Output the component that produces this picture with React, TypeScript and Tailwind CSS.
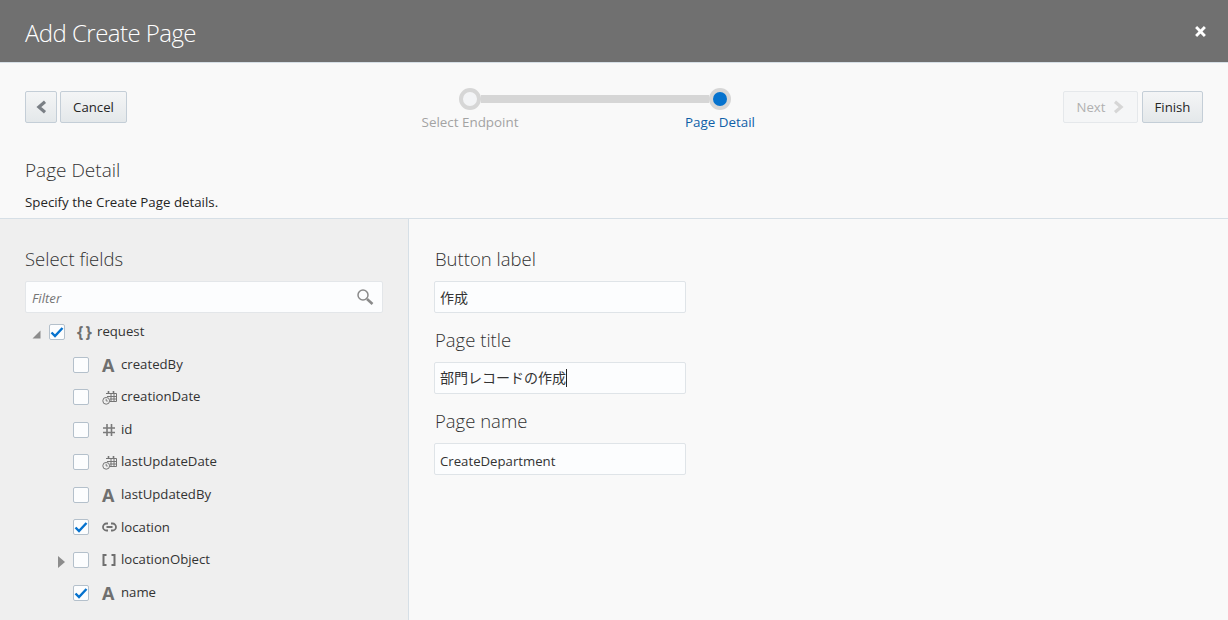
const fields = [
  { name: "createdBy", icon: "text", checked: false },
  { name: "creationDate", icon: "date", checked: false },
  { name: "id", icon: "number", checked: false },
  { name: "lastUpdateDate", icon: "date", checked: false },
  { name: "lastUpdatedBy", icon: "text", checked: false },
  { name: "location", icon: "link", checked: true },
  { name: "locationObject", icon: "array", checked: false, collapsed: true },
  { name: "name", icon: "text", checked: true },
];

function Chevron({ dir, className }: { dir: "left" | "right"; className?: string }) {
  return (
    <svg viewBox="0 0 12 16" className={className} fill="none" stroke="currentColor" strokeWidth="3.6">
      <polyline points={dir === "left" ? "10,2 3,8 10,14" : "2,2 9,8 2,14"} />
    </svg>
  );
}

function Checkbox({ checked }: { checked: boolean }) {
  return (
    <span className="flex h-4 w-4 shrink-0 items-center justify-center rounded-[2px] border border-[#b4c0cb] bg-[#fcfdfe]">
      {checked && (
        <svg viewBox="0 0 14 14" className="h-[14px] w-[14px]" fill="none" stroke="#0572ce" strokeWidth="2.4">
          <polyline points="1.5,7.5 5,11 12.5,3" />
        </svg>
      )}
    </span>
  );
}

function FieldIcon({ type }: { type: string }) {
  if (type === "text") {
    return <span className="text-[18px] leading-none font-bold text-[#6f6f6f]">A</span>;
  }
  if (type === "date") {
    return (
      <svg viewBox="0 0 15 15" className="h-[15px] w-[15px]" fill="none" stroke="#757575">
        <path d="M4 3.5h10.5v8H8" />
        <path d="M6.5 1v3M11.5 1v3" strokeWidth="1.6" />
        <path d="M5 6.5h9.5M8 9h6.5M9 3.5v8M12 3.5v8" strokeWidth="1" />
        <circle cx="4.2" cy="10.8" r="3.4" fill="#efefef" />
        <path d="M4.2 8.8v2.2h1.6" strokeWidth="0.9" />
      </svg>
    );
  }
  if (type === "number") {
    return (
      <svg viewBox="0 0 14 14" className="h-[14px] w-[14px]" fill="none" stroke="#7a7a7a" strokeWidth="1.6">
        <path d="M5 1v12M9.5 1v12M1 5h12M1 9.5h12" />
      </svg>
    );
  }
  if (type === "link") {
    return (
      <svg viewBox="0 0 15 14" className="h-[14px] w-[15px]" fill="none" stroke="#707070" strokeWidth="1.8">
        <path d="M6 3.5H4.5a3.5 3.5 0 0 0 0 7H6M9 3.5h1.5a3.5 3.5 0 0 1 0 7H9M4.5 7h6" />
      </svg>
    );
  }
  return (
    <svg viewBox="0 0 14 14" className="h-[14px] w-[14px]" fill="none" stroke="#6f6f6f" strokeWidth="2">
      <path d="M4.5 2H1.5v10h3M9.5 2h3v10h-3" />
    </svg>
  );
}

function Step({ label, active }: { label: string; active?: boolean }) {
  return (
    <span className={`w-[250px] text-center text-[13.4px] leading-[18px] ${active ? "text-[#0f5fa8]" : "text-[#a3a3a3]"}`}>
      {label}
    </span>
  );
}

function TextField({ label, children, cjk }: { label: string; children: React.ReactNode; cjk?: boolean }) {
  return (
    <div>
      <div className="h-[32px] pl-[1px] text-[18.5px] leading-[24px] font-light text-[#333]">{label}</div>
      <div
        className={`mt-[2px] flex h-[32px] w-[252px] items-center rounded-[2px] border border-[#dfe4e8] bg-[#fcfdfe] px-[5px] text-[#333] ${
          cjk ? "text-[14px]" : "pt-[6px] text-[13.2px]"
        }`}
      >
        {children}
      </div>
    </div>
  );
}

export default function App() {
  return (
    <div className="flex h-[620px] w-full flex-col overflow-hidden bg-[#f9f9f9] font-['Open_Sans','Noto_Sans_CJK_JP',sans-serif] text-[#252525]">
      <header className="flex h-[63px] shrink-0 items-center justify-between border-b border-[#d6dfe6] bg-[#707070] pr-[22px] pl-[25px]">
        <h1 className="pt-[4px] text-[24px] font-light tracking-[-0.55px] text-white">Add Create Page</h1>
        <svg viewBox="0 0 10 10" className="h-[11px] w-[11px]" fill="none" stroke="white" strokeWidth="2.6">
          <path d="M1 1l8 8M9 1l-8 8" />
        </svg>
      </header>

      <div className="h-[156px] shrink-0 border-b border-[#d6dfe6] px-[25px]">
        <div className="flex pt-[28px]">
          <div className="flex gap-[3px]">
            <button className="flex h-[32px] w-[32px] items-center justify-center rounded-[2px] border border-[#c4ced7] bg-gradient-to-b from-[#f4f5f6] to-[#e4e8ea] text-[#7a7f85]">
              <Chevron dir="left" className="h-[14px] w-[11px]" />
            </button>
            <button className="h-[32px] w-[67px] rounded-[2px] border border-[#c4ced7] bg-gradient-to-b from-[#f4f5f6] to-[#e4e8ea] pt-[2px] text-[13.2px]">
              Cancel
            </button>
          </div>

          <div className="flex flex-1 justify-center">
            <div className="flex w-[500px] flex-col items-center">
              <div className="-mt-[3px] flex h-[22px] w-[272px] items-center">
                <span className="h-[22px] w-[22px] shrink-0 rounded-full border-[4px] border-[#d6d6d6] bg-[#f3f4f6]" />
                <span className="h-[8px] flex-1 bg-[#d6d6d6]" />
                <span className="flex h-[22px] w-[22px] shrink-0 items-center justify-center rounded-full bg-[#d6d6d6]">
                  <span className="h-[14px] w-[14px] rounded-full bg-[#0572ce]" />
                </span>
              </div>
              <div className="mt-[3px] flex w-full justify-center">
                <Step label="Select Endpoint" />
                <Step label="Page Detail" active />
              </div>
            </div>
          </div>

          <div className="flex gap-[4px]">
            <button className="flex h-[32px] w-[75px] items-center justify-center gap-[8px] rounded-[2px] border border-[#e5e8eb] bg-[#f5f6f7] text-[13.2px] text-[#b0b0b0]">
              <span className="pt-[2px]">Next</span>
              <Chevron dir="right" className="h-[14px] w-[11px] text-[#d6d6d6]" />
            </button>
            <button className="h-[32px] w-[61px] rounded-[2px] border border-[#c4ced7] bg-gradient-to-b from-[#f4f5f6] to-[#e4e8ea] pt-[2px] text-[13.2px]">
              Finish
            </button>
          </div>
        </div>
        <h2 className="mt-[26px] text-[19px] leading-[26px] font-light text-[#333]">Page Detail</h2>
        <p className="mt-[10px] text-[13.3px] leading-[18px]">Specify the Create Page details.</p>
      </div>

      <div className="flex min-h-0 flex-1">
        <aside className="w-[409px] shrink-0 border-r border-[#d6dfe6] bg-[#efefef] pt-[28px] pr-[25px] pl-[25px]">
          <div className="h-[34px] text-[18.5px] leading-[24px] font-light text-[#333]">Select fields</div>
          <div className="flex h-[32px] w-[358px] items-center justify-between rounded-[2px] border border-[#e3e6e9] bg-[#fcfdfe] pr-[8px] pl-[6px]">
            <span className="pt-[4px] text-[13.2px] text-[#757575] italic">Filter</span>
            <svg viewBox="0 0 18 18" className="h-[18px] w-[18px]" fill="none" stroke="#8a8a8a">
              <circle cx="7" cy="7" r="5" strokeWidth="1.5" />
              <path d="M11 11l5.5 5" strokeWidth="2.6" />
            </svg>
          </div>
          <div className="mt-[3.4px] flex h-[32px] items-center">
            <svg viewBox="0 0 9 9" className="mt-[4px] ml-[7px] h-[9px] w-[9px]" fill="#8c8c8c">
              <polygon points="8.5,0.5 8.5,8.5 0.5,8.5" />
            </svg>
            <span className="ml-[8px]">
              <Checkbox checked />
            </span>
            <span className="ml-[12px] w-[20px] text-[16px] leading-none font-bold tracking-[-1px] text-[#6f6f6f]">{"{ }"}</span>
            <span className="text-[13.2px] text-[#333]">request</span>
          </div>
          {fields.map((f) => (
            <div key={f.name} className="flex h-[32.57px] items-center pl-[33px]">
              <span className="flex w-[15px] shrink-0 justify-start">
                {f.collapsed && (
                  <svg viewBox="0 0 7 12" className="mt-[4px] h-[12px] w-[7px]" fill="#8c8c8c">
                    <polygon points="0,0 7,6 0,12" />
                  </svg>
                )}
              </span>
              <Checkbox checked={f.checked} />
              <span className="ml-[13px] flex w-[19px] shrink-0 items-center justify-start">
                <FieldIcon type={f.icon} />
              </span>
              <span className="text-[13.2px] text-[#333]">{f.name}</span>
            </div>
          ))}
        </aside>

        <main className="flex flex-1 flex-col gap-[15px] pt-[28px] pl-[25px]">
          <TextField label="Button label" cjk>
            作成
          </TextField>
          <TextField label="Page title" cjk>
            <span className="border-r border-[#222] leading-[18px]">部門レコードの作成</span>
          </TextField>
          <TextField label="Page name">CreateDepartment</TextField>
        </main>
      </div>
    </div>
  );
}
